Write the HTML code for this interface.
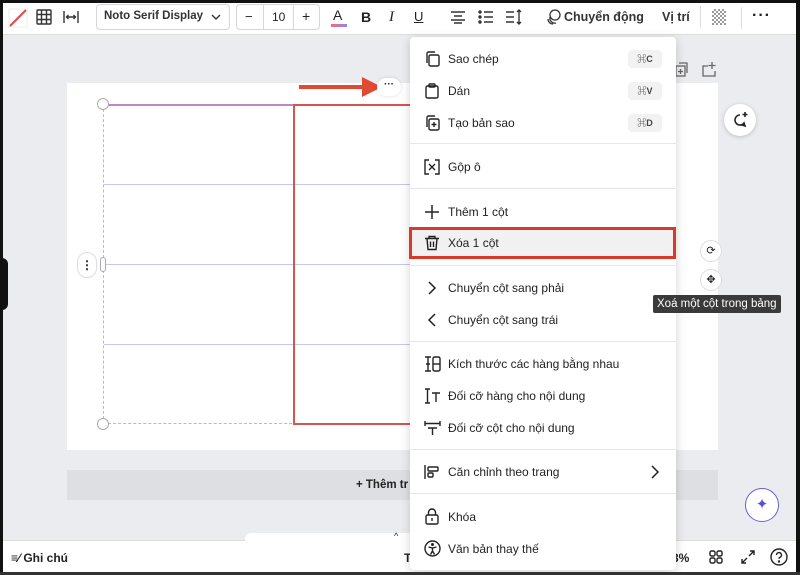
<!DOCTYPE html>
<html><head><meta charset="utf-8"><style>
*{margin:0;padding:0;box-sizing:border-box}
body{width:800px;height:575px;overflow:hidden;background:#ebecf0;font-family:"Liberation Sans","Noto Sans CJK SC",sans-serif;color:#222;position:relative;font-size:12px}
.a{position:absolute}
.tb{left:0;top:0;width:800px;height:35px;background:#fff;border-bottom:1px solid #ddd}
.frameT{left:0;top:0;width:800px;height:3px;background:#111}
.frameL{left:0;top:0;width:3px;height:575px;background:#111}
.frameR{right:0;top:0;width:4px;height:575px;background:#111}
.frameB{left:0;bottom:0;width:800px;height:3px;background:#333}
.box{border:1px solid #d5d6da;border-radius:4px;height:26px;top:4px}
.page{left:67px;top:83px;width:651px;height:367px;background:#fff}
.menu{left:410px;top:37px;width:266px;height:533px;background:#fff;box-shadow:0 2px 10px rgba(0,0,0,.18);border-radius:4px}
.it{position:absolute;left:38px;font-size:12px;color:#222}
.ic{position:absolute;left:14px}
.dv{position:absolute;left:0;width:266px;height:1px;background:#e6e6e8}
.kb{position:absolute;right:14px;width:34px;height:18px;background:#f2f2f3;border-radius:4px;font-size:9px;font-weight:bold;text-align:center;line-height:18px;color:#444}
</style></head><body>
<div class="a tb"></div>
<!-- toolbar -->
<svg class="a" style="left:8px;top:8px" width="20" height="20"><line x1="2" y1="18" x2="18" y2="2" stroke="#e04848" stroke-width="2"/><rect x="1" y="1" width="18" height="18" fill="none" stroke="#eee"/></svg>
<svg class="a" style="left:36px;top:9px" width="16" height="16" fill="none" stroke="#333" stroke-width="1.4"><rect x="1" y="1" width="14" height="14" rx="1"/><path d="M1 5.5h14M1 10.5h14M5.5 1v14M10.5 1v14"/></svg>
<svg class="a" style="left:63px;top:10px" width="16" height="14" fill="none" stroke="#333" stroke-width="1.4"><path d="M1 1v12M15 1v12M3.5 7h9M5.5 5l-2 2 2 2M10.5 5l2 2-2 2"/></svg>
<div class="a box" style="left:96px;width:134px"></div>
<div class="a" style="left:104px;top:10px;font-size:11.5px;font-weight:bold;color:#333">Noto Serif Display</div>
<svg class="a" style="left:211px;top:13px" width="10" height="8"><path d="M1 2l4 4 4-4" fill="none" stroke="#333" stroke-width="1.4"/></svg>
<div class="a box" style="left:236px;width:84px"></div>
<div class="a" style="left:263px;top:4px;width:1px;height:26px;background:#d5d6da"></div>
<div class="a" style="left:293px;top:4px;width:1px;height:26px;background:#d5d6da"></div>
<div class="a" style="left:245px;top:9px;font-size:13px">−</div>
<div class="a" style="left:272px;top:10px;font-size:12px">10</div>
<div class="a" style="left:302px;top:8px;font-size:14px">+</div>
<div class="a" style="left:333px;top:7px;font-size:14px">A</div>
<div class="a" style="left:331px;top:24px;width:16px;height:3px;background:linear-gradient(90deg,#f66,#88f)"></div>
<div class="a" style="left:361px;top:9px;font-size:14px;font-weight:bold">B</div>
<div class="a" style="left:389px;top:9px;font-size:15px;font-style:italic;font-family:'Liberation Serif',serif">I</div>
<div class="a" style="left:414px;top:9px;font-size:13px;text-decoration:underline">U</div>
<svg class="a" style="left:450px;top:10px" width="16" height="14" stroke="#333" stroke-width="1.4"><path d="M1 2h14M4 6h8M1 10h14M4 13h8"/></svg>
<svg class="a" style="left:478px;top:9px" width="16" height="16" stroke="#333" stroke-width="1.4" fill="#333"><circle cx="2" cy="3" r="1"/><circle cx="2" cy="8" r="1"/><circle cx="2" cy="13" r="1"/><path d="M6 3h9M6 8h9M6 13h9" fill="none"/></svg>
<svg class="a" style="left:505px;top:9px" width="18" height="16" stroke="#333" stroke-width="1.4" fill="none"><path d="M1 3h8M1 8h8M1 13h8M14 1v14M12 3l2-2 2 2M12 13l2 2 2-2"/></svg>
<svg class="a" style="left:545px;top:8px" width="18" height="18" fill="none" stroke="#333" stroke-width="1.3"><circle cx="10" cy="7" r="5"/><path d="M5 9a5 5 0 0 0 6 6M3 11a5 5 0 0 0 5 5"/></svg>
<div class="a" style="left:564px;top:10px;font-size:12.5px;font-weight:bold;color:#333">Chuyển động</div>
<div class="a" style="left:662px;top:10px;font-size:12.5px;font-weight:bold;color:#333">Vị trí</div>
<div class="a" style="left:700px;top:6px;width:1px;height:22px;background:#ddd"></div>
<div class="a" style="left:712px;top:9px;width:14px;height:16px;background:repeating-conic-gradient(#555 0 25%,#fff 0 50%) 0 0/4px 4px;opacity:.6"></div>
<div class="a" style="left:741px;top:7px;width:1px;height:22px;background:#ddd"></div>
<div class="a" style="left:752px;top:7px;font-size:16px;font-weight:bold;letter-spacing:1px">···</div>

<!-- canvas -->
<div class="a page"></div>
<svg class="a" style="left:660px;top:60px" width="60" height="20" fill="none" stroke="#666" stroke-width="1.3"><rect x="16" y="6" width="9" height="10"/><path d="M19 3h8v10M20.5 9v5M18 11.5h5"/><path d="M48 6h-5v10h12v-5M52 2v7M48.5 5.5h7"/></svg>
<div class="a" style="left:724px;top:104px;width:32px;height:32px;border-radius:50%;background:#fff;box-shadow:0 1px 4px rgba(0,0,0,.2)"></div>
<svg class="a" style="left:731px;top:111px" width="18" height="18" fill="none" stroke="#222" stroke-width="1.6"><path d="M9 4a5 5 0 1 0 4 8l1 3-3-1a5 5 0 0 1-2 0"/><path d="M14 1v5M11.5 3.5h5"/></svg>
<div class="a" style="left:700px;top:240px;width:22px;height:22px;border-radius:50%;background:#fff;border:1px solid #ddd;font-size:11px;text-align:center;line-height:20px">⟳</div>
<div class="a" style="left:700px;top:269px;width:22px;height:22px;border-radius:50%;background:#fff;border:1px solid #ddd;font-size:11px;text-align:center;line-height:20px">✥</div>

<!-- table -->
<div class="a" style="left:103px;top:104px;width:310px;height:320px;border:1px dashed #bbb;border-right:none"></div>
<div class="a" style="left:104px;top:104px;width:310px;height:2px;background:#c084c8"></div>
<div class="a" style="left:104px;top:184px;width:306px;height:1px;background:#c6c6ee"></div>
<div class="a" style="left:104px;top:264px;width:306px;height:1px;background:#c6c6ee"></div>
<div class="a" style="left:104px;top:344px;width:306px;height:1px;background:#c6c6ee"></div>
<div class="a" style="left:293px;top:104px;width:120px;height:321px;border:2px solid #d9534f;border-right:none"></div>
<div class="a" style="left:97px;top:98px;width:12px;height:12px;border-radius:50%;background:#fff;border:1px solid #aaa"></div>
<div class="a" style="left:97px;top:418px;width:12px;height:12px;border-radius:50%;background:#fff;border:1px solid #aaa"></div>
<div class="a" style="left:100px;top:257px;width:6px;height:15px;border-radius:3px;background:#fff;border:1px solid #aaa"></div>
<div class="a" style="left:77px;top:252px;width:20px;height:26px;border-radius:10px;background:#fff;border:1px solid #ddd;font-size:12px;text-align:center;line-height:24px;font-weight:bold">⋮</div>
<div class="a" style="left:0;top:258px;width:8px;height:52px;background:#111;border-radius:0 6px 6px 0"></div>
<div class="a" style="left:299px;top:85px;width:70px;height:4px;background:#e04a33"></div>
<svg class="a" style="left:362px;top:77px" width="20" height="20"><path d="M0 0L20 10L0 20z" fill="#e04a33"/></svg>
<div class="a" style="left:377px;top:78px;width:24px;height:18px;border-radius:9px;background:#fff;box-shadow:0 0 3px rgba(0,0,0,.15);font-size:10px;font-weight:bold;text-align:center;line-height:14px">···</div>

<div class="a" style="left:67px;top:470px;width:651px;height:30px;background:#dedfe3"></div>
<div class="a" style="left:356px;top:479px;font-size:11.5px;font-weight:bold">+ Thêm tr</div>
<div class="a" style="left:745px;top:488px;width:34px;height:34px;border-radius:50%;background:#fff;border:1.5px solid #6b5bd6;color:#5a4fcf;text-align:center;line-height:32px;font-size:15px">✦</div>

<!-- bottom bar -->
<div class="a" style="left:0;top:540px;width:800px;height:35px;background:#fff;border-top:1px solid #ddd"></div>
<div class="a" style="left:245px;top:533px;width:400px;height:10px;background:#fff;border-radius:6px 6px 0 0"></div>
<div class="a" style="left:394px;top:531px;font-size:9px">^</div>
<div class="a" style="left:11px;top:551px;font-size:12px;font-weight:bold">≡⁄ Ghi chú</div>
<div class="a" style="left:404px;top:551px;font-size:12px;font-weight:bold">T</div>
<div class="a" style="left:672px;top:551px;font-size:12px;font-weight:bold">3%</div>
<svg class="a" style="left:709px;top:550px" width="14" height="14" fill="none" stroke="#222" stroke-width="1.4"><rect x="1" y="1" width="5" height="5" rx="1.5"/><rect x="8" y="1" width="5" height="5" rx="1.5"/><rect x="1" y="8" width="5" height="5" rx="1.5"/><rect x="8" y="8" width="5" height="5" rx="1.5"/></svg>
<svg class="a" style="left:741px;top:550px" width="14" height="14" fill="none" stroke="#222" stroke-width="1.4"><path d="M8 6l5-5M9 1h4v4M6 8l-5 5M1 9v4h4"/></svg>
<svg class="a" style="left:770px;top:548px" width="18" height="18" fill="none" stroke="#222" stroke-width="1.4"><circle cx="9" cy="9" r="8"/><path d="M6.5 7a2.5 2.5 0 1 1 3.5 2.3c-.7.3-1 .8-1 1.5"/><circle cx="9" cy="13.5" r=".5" fill="#222"/></svg>

<!-- menu -->
<div class="a menu">
 <svg class="ic" style="top:14px" width="16" height="16" fill="none" stroke="#222" stroke-width="1.4"><rect x="5" y="4" width="10" height="11" rx="1.5"/><path d="M3 12V2.5A1.5 1.5 0 0 1 4.5 1H11"/></svg>
 <div class="it" style="top:15px">Sao chép</div><div class="kb" style="top:13px">⌘C</div>
 <svg class="ic" style="top:46px" width="16" height="16" fill="none" stroke="#222" stroke-width="1.4"><rect x="2" y="3" width="12" height="12" rx="1.5"/><rect x="5" y="1" width="6" height="3" rx="1"/></svg>
 <div class="it" style="top:47px">Dán</div><div class="kb" style="top:45px">⌘V</div>
 <svg class="ic" style="top:78px" width="16" height="16" fill="none" stroke="#222" stroke-width="1.4"><rect x="5" y="4" width="10" height="11" rx="1.5"/><path d="M3 12V2.5A1.5 1.5 0 0 1 4.5 1H11M10 7v5M7.5 9.5h5"/></svg>
 <div class="it" style="top:79px">Tạo bản sao</div><div class="kb" style="top:77px">⌘D</div>
 <div class="dv" style="top:106px"></div>
 <svg class="ic" style="top:122px" width="16" height="16" fill="none" stroke="#222" stroke-width="1.4"><path d="M5 1H1v14h4M11 1h4v14h-4M5 5l3 3-3 3M11 5L8 8l3 3"/></svg>
 <div class="it" style="top:123px">Gộp ô</div>
 <div class="dv" style="top:151px"></div>
 <svg class="ic" style="top:167px" width="16" height="16" stroke="#222" stroke-width="1.5"><path d="M8 1v14M1 8h14"/></svg>
 <div class="it" style="top:168px">Thêm 1 cột</div>
 <div style="position:absolute;left:-1px;top:190px;width:267px;height:32px;border:3px solid #d8392b;background:#f1f1f2"></div>
 <svg class="ic" style="top:198px" width="16" height="16" fill="none" stroke="#222" stroke-width="1.4"><path d="M1 3.5h14M5 3.5V1.5h6v2M3 3.5l1 11h8l1-11M6.5 6.5v5.5M9.5 6.5v5.5"/></svg>
 <div class="it" style="top:199px">Xóa 1 cột</div>
 <div class="dv" style="top:228px"></div>
 <svg class="ic" style="top:243px" width="16" height="16" fill="none" stroke="#222" stroke-width="1.5"><path d="M5 2l6 6-6 6"/></svg>
 <div class="it" style="top:244px">Chuyển cột sang phải</div>
 <svg class="ic" style="top:275px" width="16" height="16" fill="none" stroke="#222" stroke-width="1.5"><path d="M11 2L5 8l6 6"/></svg>
 <div class="it" style="top:276px">Chuyển cột sang trái</div>
 <div class="dv" style="top:304px"></div>
 <svg class="ic" style="top:319px" width="18" height="16" fill="none" stroke="#222" stroke-width="1.4"><path d="M1 1h6M1 15h6M4 1v14M2 8h4"/><rect x="9" y="1" width="7" height="14" rx="1.5"/><path d="M9 8h7"/></svg>
 <div class="it" style="top:320px">Kích thước các hàng bằng nhau</div>
 <svg class="ic" style="top:351px" width="18" height="16" fill="none" stroke="#222" stroke-width="1.4"><path d="M1 1h5M1 15h5M3.5 1v14M8 5h8M12 5v9"/></svg>
 <div class="it" style="top:352px">Đối cỡ hàng cho nội dung</div>
 <svg class="ic" style="top:383px" width="18" height="16" fill="none" stroke="#222" stroke-width="1.4"><path d="M1 1v5M16 1v5M1 3.5h15M4 8h9M8.5 8v7"/></svg>
 <div class="it" style="top:384px">Đối cỡ cột cho nội dung</div>
 <div class="dv" style="top:412px"></div>
 <svg class="ic" style="top:427px" width="16" height="16" fill="none" stroke="#222" stroke-width="1.4"><path d="M1 1v14"/><rect x="4" y="3" width="10" height="4" rx="1"/><rect x="4" y="9" width="5" height="4" rx="1"/></svg>
 <div class="it" style="top:428px">Căn chỉnh theo trang</div>
 <svg style="position:absolute;right:16px;top:427px" width="10" height="16" fill="none" stroke="#222" stroke-width="1.5"><path d="M2 2l6 6-6 6"/></svg>
 <div class="dv" style="top:456px"></div>
 <svg class="ic" style="top:471px" width="16" height="17" fill="none" stroke="#222" stroke-width="1.4"><path d="M4.5 7V4.5a3.5 3.5 0 0 1 7 0V7"/><rect x="2" y="7" width="12" height="9" rx="1.5"/><path d="M8 10v3"/></svg>
 <div class="it" style="top:473px">Khóa</div>
 <svg class="ic" style="top:503px" width="17" height="17" fill="none" stroke="#222" stroke-width="1.4"><circle cx="8.5" cy="8.5" r="7.5"/><circle cx="8.5" cy="4.5" r=".8" fill="#222"/><path d="M4.5 7l4 1 4-1M8.5 8v3l-2 3.5M8.5 11l2 3.5"/></svg>
 <div class="it" style="top:505px">Văn bản thay thế</div>
</div>

<div class="a" style="left:653px;top:295px;background:#3a3a3a;color:#fff;font-size:11.5px;padding:3px 4px;border-radius:2px;white-space:nowrap;z-index:5">Xoá một cột trong bảng</div>

<div class="a frameT"></div><div class="a frameL"></div><div class="a frameR"></div><div class="a frameB"></div>
</body></html>
